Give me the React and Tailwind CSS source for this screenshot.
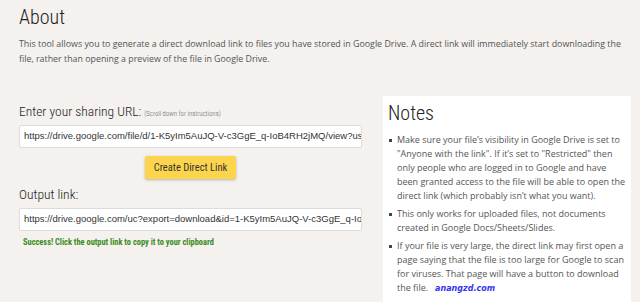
import React from 'react'

const narrow = "font-['Roboto_Condensed','Liberation_Sans_Narrow','DejaVu_Sans_Condensed',Roboto,sans-serif]"

const notes = [
  'Make sure your file\u2019s visibility in Google Drive is set to "Anyone with the link". If it\u2019s set to "Restricted" then only people who are logged in to Google and have been granted access to the file will be able to open the direct link (which probably isn\u2019t what you want).',
  'This only works for uploaded files, not documents created in Google Docs/Sheets/Slides.',
]

const UrlBox = ({ value }) => (
  <div className="h-[23px] bg-white border border-[#dcdcdc] rounded-[2px] px-[4px] flex items-center overflow-hidden whitespace-nowrap font-['Liberation_Sans',Arial,sans-serif] text-[9.5px] text-[#333]">
    {value}
  </div>
)

const Bullet = () => (
  <span className="w-[3px] h-[3px] bg-[#444] mt-[6px] ml-[1px] mr-[5px] shrink-0"></span>
)

const App = () => {
  return (
    <div className="h-[302px] w-[640px] overflow-hidden bg-[#f4f1ee] font-['Open_Sans',sans-serif] text-[#555]">
      {/* About */}
      <div className="px-[19px] pt-[4px]">
        <h1 className={`${narrow} font-light text-[20px] leading-[26px] text-[#222]`}>About</h1>
        <p className="mt-[7px] text-[8.85px] leading-[15px]">
          This tool allows you to generate a direct download link to files you have stored in Google Drive. A direct link will immediately start downloading the file, rather than opening a preview of the file in Google Drive.
        </p>
      </div>

      <div className="flex gap-[21px] pl-[19px] mt-[29px]">
        {/* Form */}
        <div className="w-[343px] shrink-0 pt-[7px]">
          <div className={`${narrow} font-light text-[#222] h-[17px] flex items-baseline gap-[3px] leading-[17px]`}>
            <span className="text-[13.5px]">Enter your sharing URL:</span>
            <span className="text-[6.8px] leading-none text-[#666]">(Scroll down for instructions)</span>
          </div>
          <div className="mt-[5px]">
            <UrlBox value="https://drive.google.com/file/d/1-K5yIm5AuJQ-V-c3GgE_q-IoB4RH2jMQ/view?usp=sharing" />
          </div>
          <div className="flex justify-center mt-[8px]">
            <button className={`${narrow} h-[23px] w-[91px] bg-[#fdd54c] text-[#333] text-[10.5px] rounded-[2px] shadow-[0_1px_3px_rgba(0,0,0,0.25)]`}>
              Create Direct Link
            </button>
          </div>
          <div className={`${narrow} font-light mt-[7px] h-[17px] text-[13.5px] leading-[17px] text-[#222]`}>Output link:</div>
          <div className="mt-[5px]">
            <UrlBox value="https://drive.google.com/uc?export=download&id=1-K5yIm5AuJQ-V-c3GgE_q-IoB4RH2jMQ" />
          </div>
          <div className={`${narrow} mt-[5px] pl-[4px] text-[8.4px] leading-[12px] font-bold text-[#3a8c1a]`}>
            Success! Click the output link to copy it to your clipboard
          </div>
        </div>

        {/* Notes */}
        <div className="w-[248px] shrink-0 bg-white px-[5px] pt-[4px] pb-[20px]">
          <h2 className={`${narrow} font-light text-[20px] leading-[26px] text-[#222]`}>Notes</h2>
          <ul className="mt-[7px] flex flex-col gap-[4px] text-[9px] leading-[14px]">
            {notes.map((n, i) => (
              <li key={i} className="flex">
                <Bullet />
                <span>{n}</span>
              </li>
            ))}
            <li className="flex">
              <Bullet />
              <span>
                If your file is very large, the direct link may first open a page saying that the file is too large for Google to scan for viruses. That page will have a button to download the file.
                <span className="ml-[7px] font-['DejaVu_Sans',sans-serif] italic font-bold text-[8px] text-[#3535f0]">anangzd.com</span>
              </span>
            </li>
          </ul>
        </div>
      </div>
    </div>
  )
}

export default App
